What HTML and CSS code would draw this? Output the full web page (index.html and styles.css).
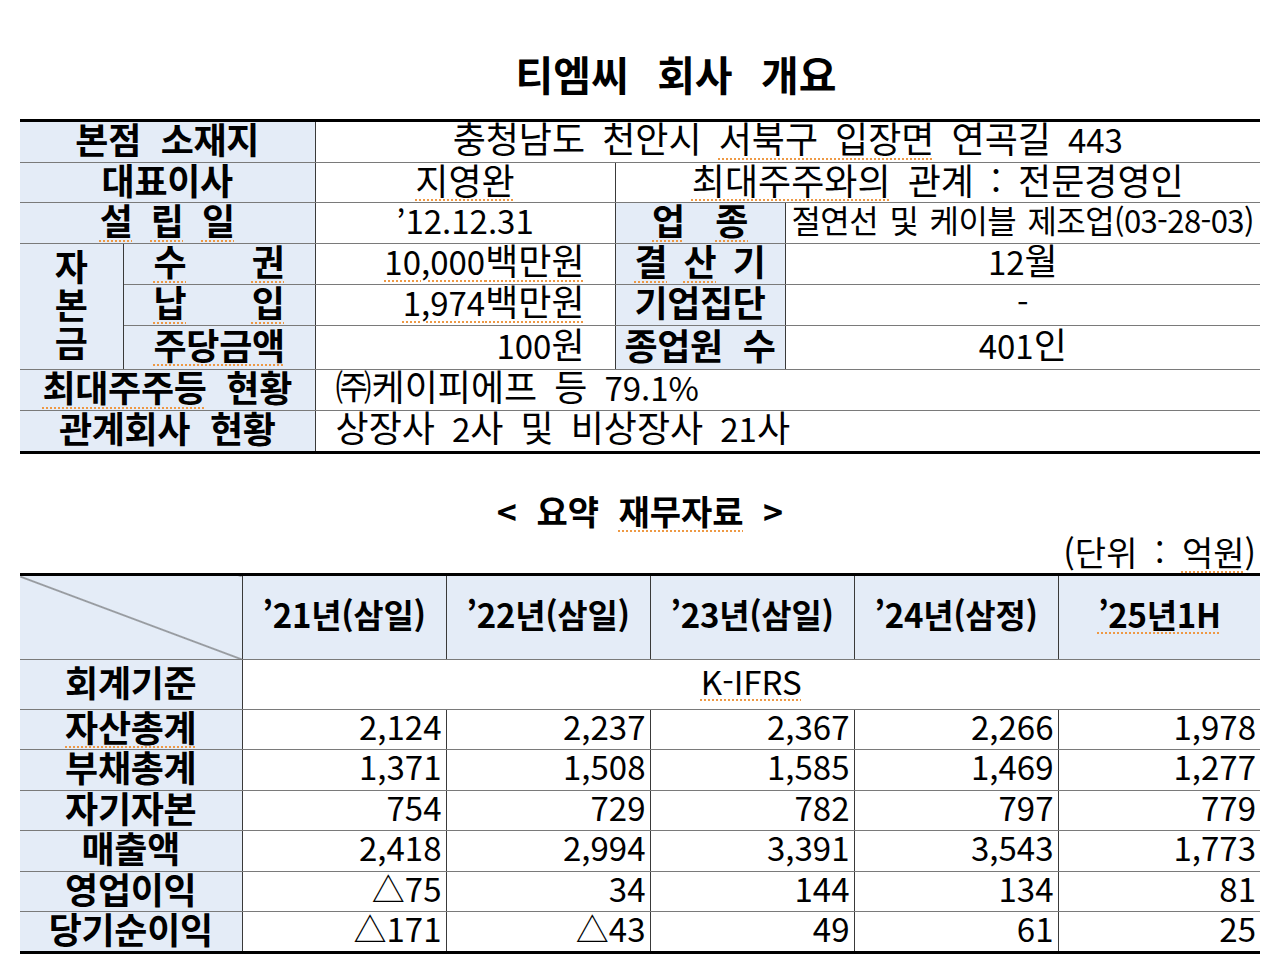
FILE: index.html
```html
<!DOCTYPE html>
<html lang="ko">
<head>
<meta charset="utf-8">
<title>티엠씨 회사 개요</title>
<link rel="stylesheet" href="styles.css">
</head>
<body>
<div class="page">
  <h1 class="title">티엠씨 회사 개요</h1>

  <table class="overview">
    <colgroup>
      <col class="c1"><col class="c2"><col class="c3"><col class="c4"><col class="c5">
    </colgroup>
    <tr class="r40">
      <th colspan="2">본점 소재지</th>
      <td colspan="3" class="center">충청남도 천안시 <span class="sp">서북구 입장면</span> 연곡길 <span class="n">443</span></td>
    </tr>
    <tr class="r40">
      <th colspan="2">대표이사</th>
      <td class="center"><span class="sp">지영완</span></td>
      <td colspan="2" class="center"><span class="sp">최대주주와의</span> 관계 : 전문경영인</td>
    </tr>
    <tr class="r40">
      <th colspan="2"><span class="just w135 sp"><span>설</span><span>립</span><span>일</span></span></th>
      <td class="center"><span class="n">’12.12.31</span></td>
      <th><span class="just w96 sp"><span>업</span><span>종</span></span></th>
      <td class="left small">절연선 및 케이블 제조업<span class="n2">(03-28-03)</span></td>
    </tr>
    <tr class="r40">
      <th rowspan="3" class="stack">자<br>본<br>금</th>
      <th class="sub"><span class="just sp"><span>수</span><span>권</span></span></th>
      <td class="right"><span class="sp"><span class="n">10,000</span>백만원</span></td>
      <th><span class="just w131"><span class="sp">결</span><span class="sp">산</span><span>기</span></span></th>
      <td class="center"><span class="n">12</span>월</td>
    </tr>
    <tr class="r41">
      <th class="sub"><span class="just sp"><span>납</span><span>입</span></span></th>
      <td class="right"><span class="sp"><span class="n">1,974</span>백만원</span></td>
      <th>기업집단</th>
      <td class="center"><span class="n">-</span></td>
    </tr>
    <tr class="r44">
      <th class="sub"><span class="sp">주당금액</span></th>
      <td class="right"><span class="n">100</span>원</td>
      <th>종업원 수</th>
      <td class="center"><span class="n">401</span>인</td>
    </tr>
    <tr class="r41">
      <th colspan="2"><span class="sp">최대주주등</span> 현황</th>
      <td colspan="3" class="left">㈜케이피에프 등 <span class="n">79.1%</span></td>
    </tr>
    <tr class="r41 last">
      <th colspan="2">관계회사 현황</th>
      <td colspan="3" class="left">상장사 <span class="n">2</span>사 및 비상장사 <span class="n">21</span>사</td>
    </tr>
  </table>

  <h2 class="subtitle">&lt; 요약 <span class="sp">재무자료</span> &gt;</h2>
  <div class="unit">(단위 : <span class="sp">억원</span>)</div>

  <table class="fin">
    <colgroup>
      <col class="f0"><col class="f1"><col class="f1"><col class="f1"><col class="f1"><col class="f5">
    </colgroup>
    <tr class="head">
      <th class="diag"></th>
      <th>’21년(삼일)</th>
      <th>’22년(삼일)</th>
      <th>’23년(삼일)</th>
      <th>’24년(삼정)</th>
      <th><span class="sp">’25년1H</span></th>
    </tr>
    <tr class="std">
      <th>회계기준</th>
      <td colspan="5" class="center"><span class="sp">K-IFRS</span></td>
    </tr>
    <tr class="r40">
      <th><span class="sp">자산총계</span></th>
      <td>2,124</td><td>2,237</td><td>2,367</td><td>2,266</td><td>1,978</td>
    </tr>
    <tr class="r41">
      <th>부채총계</th>
      <td>1,371</td><td>1,508</td><td>1,585</td><td>1,469</td><td>1,277</td>
    </tr>
    <tr class="r40">
      <th>자기자본</th>
      <td>754</td><td>729</td><td>782</td><td>797</td><td>779</td>
    </tr>
    <tr class="r41">
      <th>매출액</th>
      <td>2,418</td><td>2,994</td><td>3,391</td><td>3,543</td><td>1,773</td>
    </tr>
    <tr class="r40">
      <th>영업이익</th>
      <td>△75</td><td>34</td><td>144</td><td>134</td><td>81</td>
    </tr>
    <tr class="r41 last">
      <th>당기순이익</th>
      <td>△171</td><td>△43</td><td>49</td><td>61</td><td>25</td>
    </tr>
  </table>
</div>
</body>
</html>
```

FILE: styles.css
```css
html, body {
  margin: 0;
  padding: 0;
  background: #ffffff;
}

body {
  font-family: "Noto Sans CJK KR", "Malgun Gothic", sans-serif;
  color: #000000;
}

.page {
  width: 1240px;
  padding: 0 20px;
}

.title {
  margin: 0;
  padding-top: 50px;
  padding-left: 72px;
  height: 69px;
  line-height: 46px;
  font-size: 41px;
  font-weight: 700;
  text-align: center;
  word-spacing: 17px;
}

table {
  border-collapse: collapse;
  table-layout: fixed;
  width: 1240px;
}

th, td {
  padding: 0 0 8px 0;
  line-height: 30px;
  font-size: 36px;
  white-space: nowrap;
  border-top: 1px solid #7a7a7a;
  border-bottom: 1px solid #7a7a7a;
  border-left: 1px solid #3a3a3a;
  border-right: 1px solid #3a3a3a;
}

th {
  background: #e4ecf7;
  font-weight: 700;
  text-align: center;
  letter-spacing: -0.3px;
  word-spacing: 10px;
}

td {
  font-weight: 400;
  word-spacing: 7px;
}

table tr:first-child th,
table tr:first-child td {
  border-top: 3px solid #000000;
}

table tr.last th,
table tr.last td {
  border-bottom: 3px solid #000000;
}

table th:first-child {
  border-left: none;
}

table tr > :last-child {
  border-right: none;
}

.overview .c1 { width: 103px; }
.overview .c2 { width: 192px; }
.overview .c3 { width: 300px; }
.overview .c4 { width: 170px; }
.overview .c5 { width: 475px; }

.r40 { height: 40px; }
.r41 { height: 41px; }
.r44 { height: 44px; }

.n { font-size: 33px; }
.n2 { font-size: 31px; }

.center { text-align: center; }
.left { text-align: left; padding-left: 20px; }
.right { text-align: right; padding-right: 30px; }
.small { font-size: 32px; padding-left: 6px; letter-spacing: -0.6px; word-spacing: 3px; }

.overview .stack {
  line-height: 38px;
  border-right: 1px solid #3a3a3a;
}

.overview .sub {
  padding-left: 30px;
  padding-right: 30px;
}

.overview .sub .just {
  width: 100%;
}

.just {
  display: inline-flex;
  justify-content: space-between;
  vertical-align: top;
}

.w135 { width: 135px; }
.w96 { width: 96px; }
.w131 { width: 131px; }

.sp {
  text-decoration: underline dotted #ee9944;
  text-decoration-thickness: 1.5px;
  text-underline-offset: 5px;
}

.just.sp > span {
  text-decoration: underline dotted #ee9944;
  text-decoration-thickness: 1.5px;
  text-underline-offset: 5px;
}

.subtitle {
  margin: 0;
  margin-top: 37px;
  height: 40px;
  line-height: 40px;
  font-size: 34px;
  font-weight: 700;
  text-align: center;
  word-spacing: 10px;
}

.unit {
  height: 42px;
  line-height: 42px;
  font-size: 34px;
  text-align: right;
  padding-right: 4px;
  word-spacing: 8px;
}

.fin .f0 { width: 222px; }
.fin .f1 { width: 204px; }
.fin .f5 { width: 202px; }

.fin .head { height: 85px; }
.fin .head th { font-size: 33px; }
.fin .std { height: 50px; }

.fin td {
  text-align: right;
  padding-right: 4px;
  font-size: 33px;
}

.fin td.center {
  text-align: center;
  padding-right: 0;
}

.fin .diag {
  background: linear-gradient(to top right,
    #e4ecf7 0, #e4ecf7 calc(50% - 1px),
    #555555 50%,
    #e4ecf7 calc(50% + 1px), #e4ecf7 100%);
}
```
